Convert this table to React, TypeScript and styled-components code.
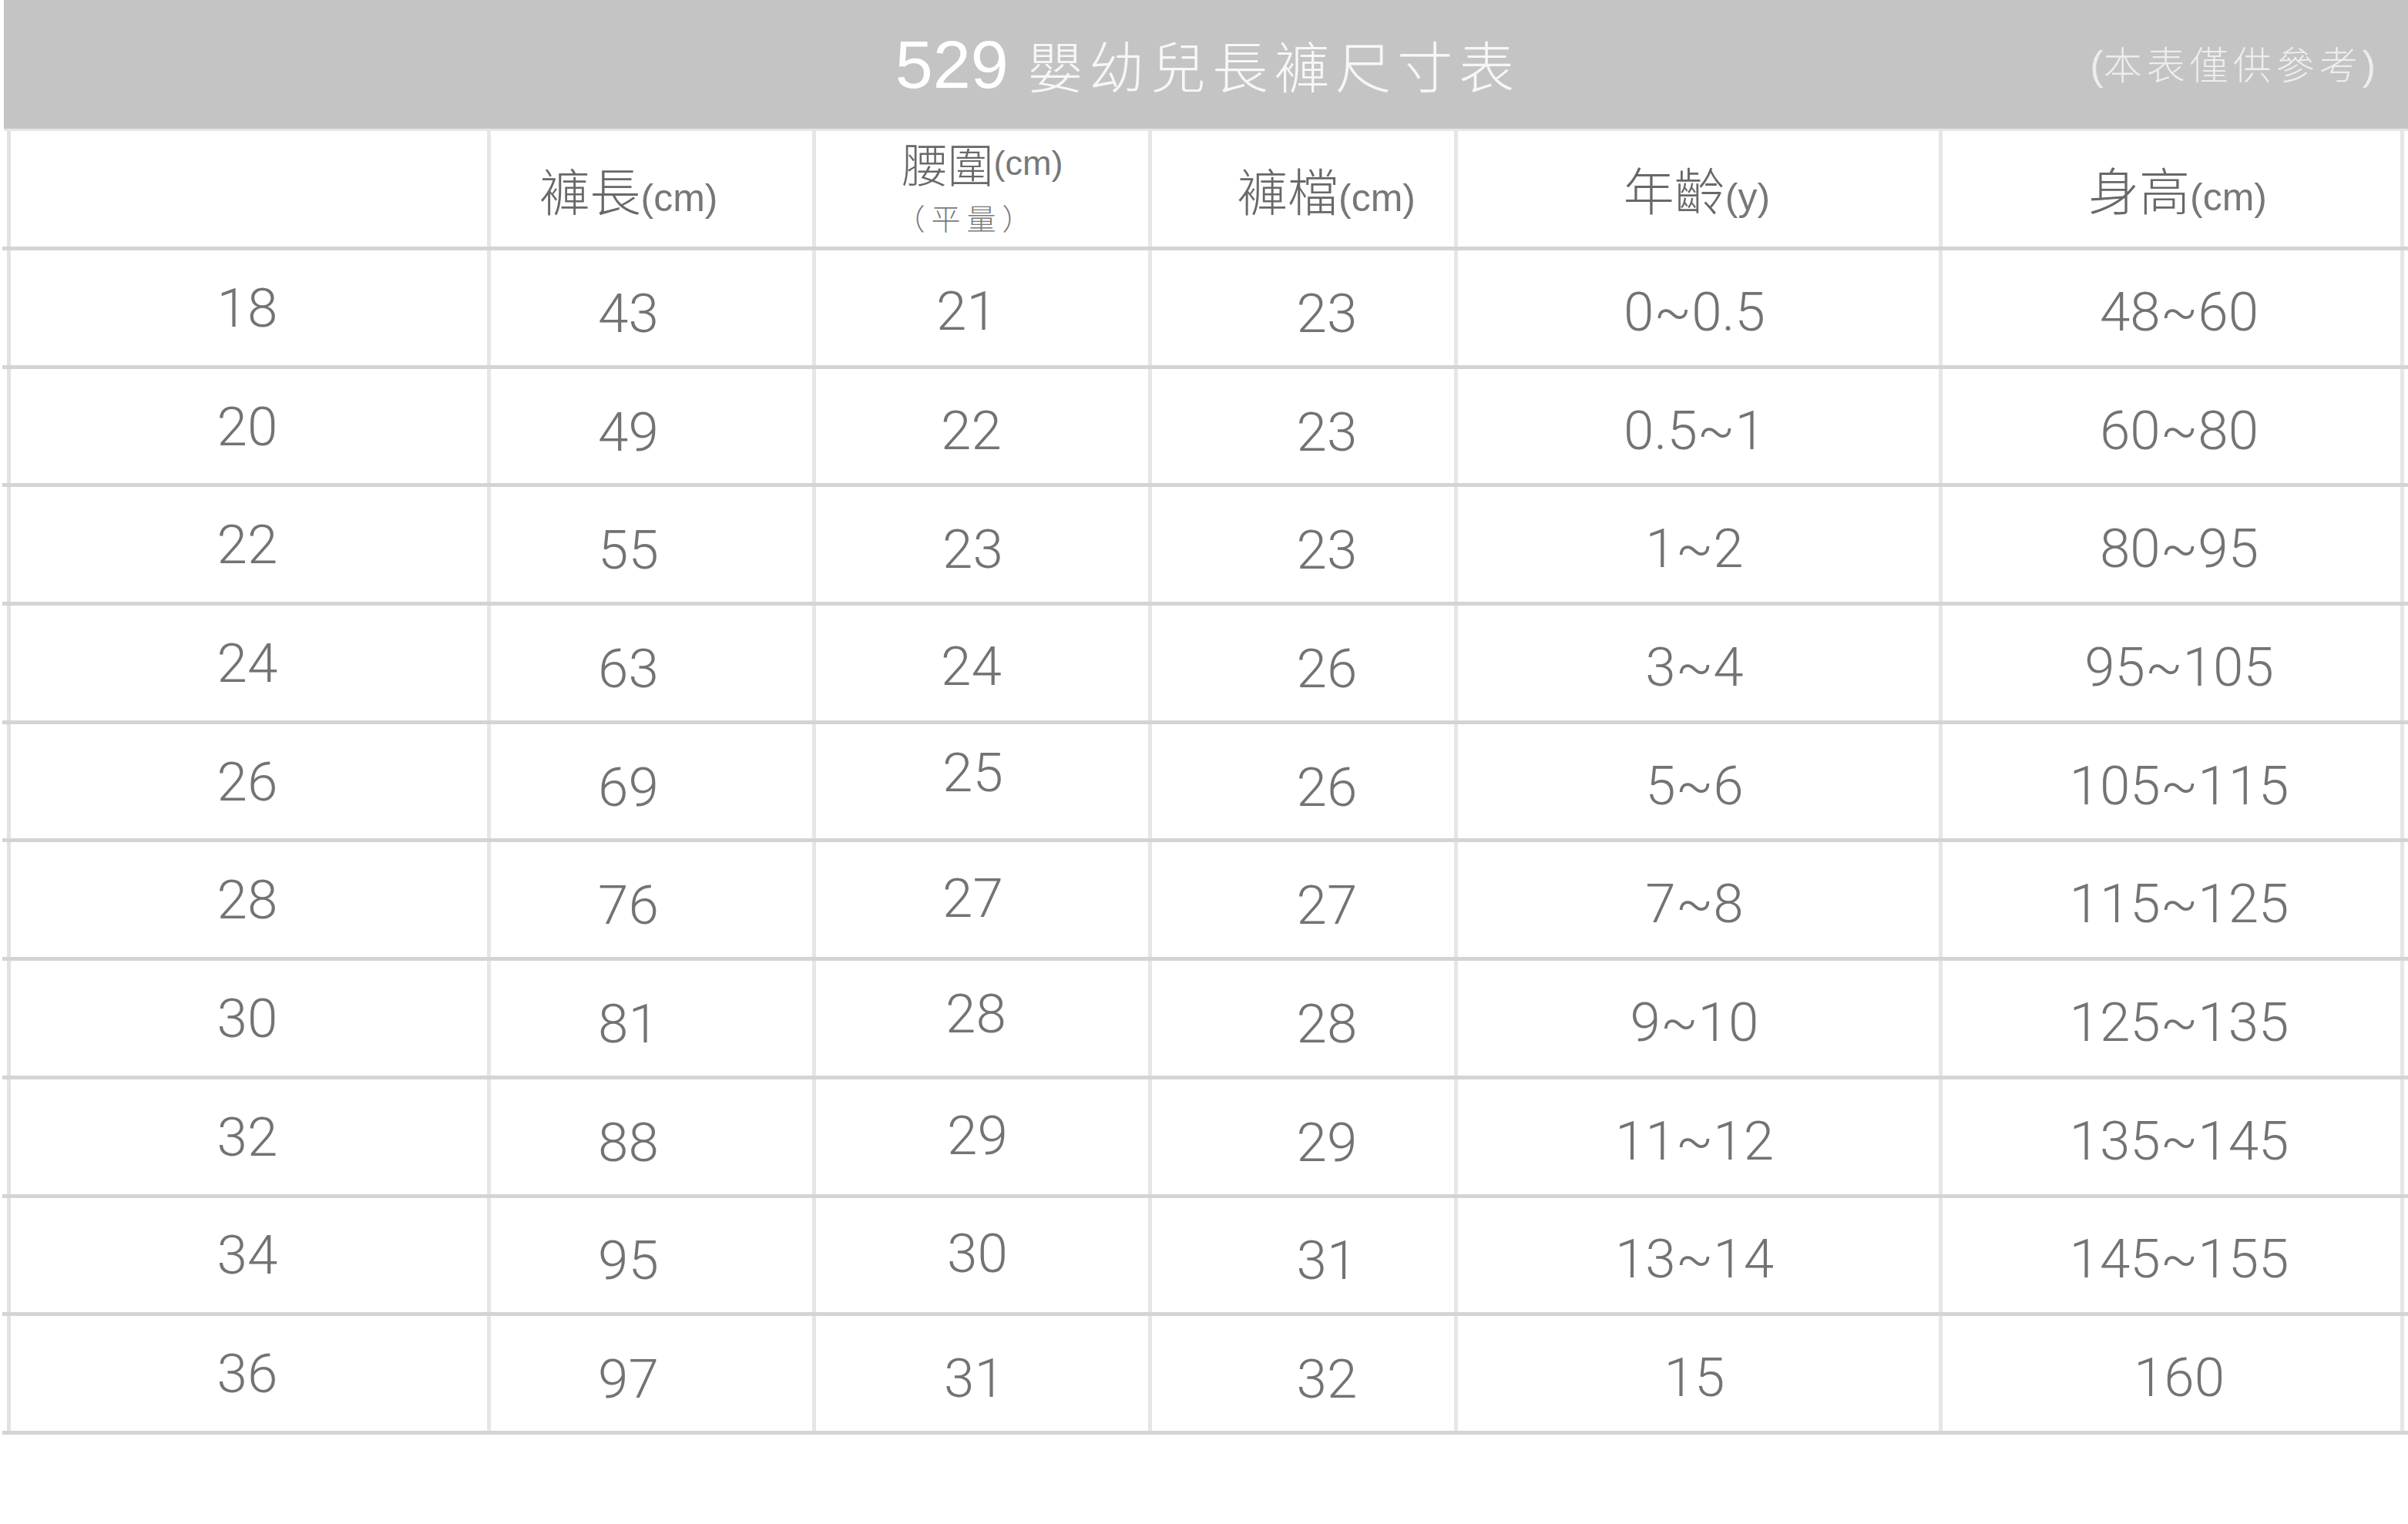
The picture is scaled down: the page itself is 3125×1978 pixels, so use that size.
import React from "react";
import styled, { createGlobalStyle, css } from "styled-components";

const Global = createGlobalStyle`
  html, body { margin: 0; padding: 0; background: #ffffff; }
  body { font-family: "Liberation Sans", "Noto Sans CJK TC", sans-serif; }
`;

const Page = styled.div`
  width: 3125px;
  min-height: 1978px;
  background: #ffffff;
`;

const Banner = styled.header`
  margin-left: 5px;
  height: 167px;
  box-sizing: content-box;
  background: #c4c4c4;
  border-bottom: 3px solid #e6e6e6;
  display: grid;
  grid-template-columns: 1fr auto 1fr;
  align-items: center;
  padding: 0 42px 0 39px;
`;

const Title = styled.h1`
  grid-column: 2;
  margin: 0;
  font-family: "Liberation Sans", "Noto Sans CJK TC", sans-serif;
  font-weight: 400;
  font-size: 88px;
  line-height: 1;
  color: #ffffff;
  white-space: nowrap;
`;

const TitleCjk = styled.span`
  font-family: "Noto Sans CJK TC", sans-serif;
  font-weight: 300;
  font-size: 72px;
  letter-spacing: 8px;
  margin-right: -8px;
  color: #f7f7f7;
`;

const Note = styled.div`
  grid-column: 3;
  justify-self: end;
  font-family: "Noto Sans CJK TC", sans-serif;
  font-weight: 300;
  font-size: 50px;
  letter-spacing: 6px;
  line-height: 1;
  color: #ededed;
  white-space: nowrap;
`;

const Paren = styled.span`
  font-family: "Liberation Sans", sans-serif;
  letter-spacing: 0;
  font-size: 52px;
`;

const Table = styled.div`
  margin-left: 3px;
`;

const Row = styled.div<{ $head?: boolean }>`
  display: grid;
  grid-template-columns: 634px 422px 436px 397px 629px 599px 1fr;
  box-sizing: border-box;
  height: ${(p) => (p.$head ? "155px" : "153.7px")};
  border-bottom: 5px solid #d4d4d4;
`;

const Cell = styled.div<{ $dx: number; $dy: number; $first?: boolean }>`
  display: flex;
  flex-direction: column;
  align-items: center;
  justify-content: center;
  box-sizing: border-box;
  border-right: 5px solid #e6e6e6;
  ${(p) =>
    p.$first &&
    css`
      margin-left: 6px;
      border-left: 5px solid #e2e2e2;
    `}
  padding-left: ${(p) => Math.max(0, p.$dx * 2)}px;
  padding-right: ${(p) => Math.max(0, -p.$dx * 2)}px;
  padding-top: ${(p) => Math.max(0, p.$dy * 2)}px;
  padding-bottom: ${(p) => Math.max(0, -p.$dy * 2)}px;
`;

const Value = styled.span`
  font-family: "Roboto", "Liberation Sans", sans-serif;
  font-weight: 300;
  font-size: 71px;
  line-height: 1;
  color: #737373;
  white-space: nowrap;
`;

const Label = styled.div<{ $center?: boolean }>`
  display: flex;
  align-items: ${(p) => (p.$center ? "center" : "baseline")};
  white-space: nowrap;
  color: #686868;
`;

const LabelCjk = styled.span<{ $size?: number }>`
  font-family: "Noto Sans CJK TC", sans-serif;
  font-weight: 300;
  font-size: ${(p) => p.$size ?? 66}px;
  line-height: 1;
`;

const Unit = styled.span<{ $size: number }>`
  font-family: "Liberation Sans", sans-serif;
  font-weight: 400;
  font-size: ${(p) => p.$size}px;
  line-height: 1;
  color: #777777;
`;

const SubLabel = styled.div`
  font-family: "Noto Sans CJK TC", sans-serif;
  font-weight: 300;
  font-size: 38px;
  letter-spacing: 8px;
  line-height: 1;
  margin-top: 22px;
  margin-right: 40px;
  color: #7a7a7a;
  white-space: nowrap;
`;

type Col = { dx: number; dy: number };

/* dx / dy: shift of the cell content from the cell centre, in px */
const dataCols: Col[] = [
  { dx: -2, dy: 0 },
  { dx: -30, dy: 7 },
  { dx: -12, dy: 4 },
  { dx: 31, dy: 7 },
  { dx: -5, dy: 5 },
  { dx: 10, dy: 5 },
];

const waistDx = [-20, -14, -12, -14, -12, -12, -8, -6, -6, -10];
const waistDy = [4, 5, 6, 4, -12, -2, -6, -2, -2, 6];

const rows: string[][] = [
  ["18", "43", "21", "23", "0~0.5", "48~60"],
  ["20", "49", "22", "23", "0.5~1", "60~80"],
  ["22", "55", "23", "23", "1~2", "80~95"],
  ["24", "63", "24", "26", "3~4", "95~105"],
  ["26", "69", "25", "26", "5~6", "105~115"],
  ["28", "76", "27", "27", "7~8", "115~125"],
  ["30", "81", "28", "28", "9~10", "125~135"],
  ["32", "88", "29", "29", "11~12", "135~145"],
  ["34", "95", "30", "31", "13~14", "145~155"],
  ["36", "97", "31", "32", "15", "160"],
];

export default function App() {
  return (
    <Page>
      <Global />
      <Banner>
        <Title>
          529 <TitleCjk>嬰幼兒長褲尺寸表</TitleCjk>
        </Title>
        <Note>
          <Paren>(</Paren>本表僅供參考<Paren>)</Paren>
        </Note>
      </Banner>
      <Table>
        <Row $head>
          <Cell $first $dx={0} $dy={0} />
          <Cell $dx={-30} $dy={2}>
            <Label>
              <LabelCjk>褲長</LabelCjk>
              <Unit $size={50}>(cm)</Unit>
            </Label>
          </Cell>
          <Cell $dx={0} $dy={-4}>
            <Label $center>
              <LabelCjk $size={60}>腰圍</LabelCjk>
              <Unit $size={45}>(cm)</Unit>
            </Label>
            <SubLabel>（平量）</SubLabel>
          </Cell>
          <Cell $dx={30} $dy={2}>
            <Label>
              <LabelCjk>褲檔</LabelCjk>
              <Unit $size={50}>(cm)</Unit>
            </Label>
          </Cell>
          <Cell $dx={-2} $dy={1}>
            <Label>
              <LabelCjk>年齡</LabelCjk>
              <Unit $size={50}>(y)</Unit>
            </Label>
          </Cell>
          <Cell $dx={8} $dy={1}>
            <Label>
              <LabelCjk>身高</LabelCjk>
              <Unit $size={50}>(cm)</Unit>
            </Label>
          </Cell>
        </Row>
        {rows.map((r, ri) => (
          <Row key={ri}>
            {r.map((v, ci) => (
              <Cell
                key={ci}
                $first={ci === 0}
                $dx={ci === 2 ? waistDx[ri] : dataCols[ci].dx}
                $dy={ci === 2 ? waistDy[ri] : dataCols[ci].dy}
              >
                <Value>{v}</Value>
              </Cell>
            ))}
          </Row>
        ))}
      </Table>
    </Page>
  );
}
